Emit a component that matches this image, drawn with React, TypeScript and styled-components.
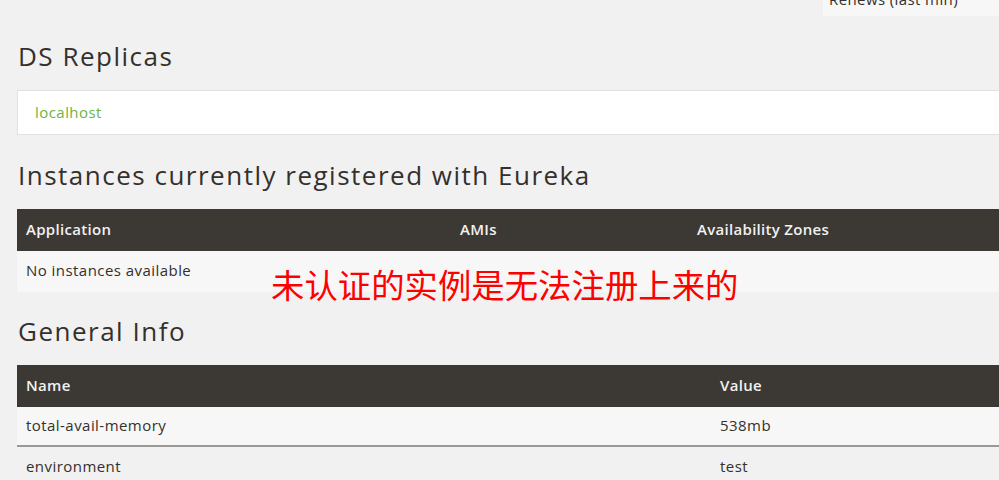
import React from "react";
import styled, { createGlobalStyle } from "styled-components";

const Global = createGlobalStyle`
  html, body { margin: 0; padding: 0; background: #f1f1f1; overflow: hidden; }
  body { font-family: "Open Sans", "Noto Sans", sans-serif; color: #34302d; }
`;

const Page = styled.div`
  position: relative;
  width: 999px;
  height: 480px;
  overflow: hidden;
  background: #f1f1f1;
`;

const TopStrip = styled.div`
  display: flex;
  justify-content: flex-end;
`;

const RenewsCell = styled.div`
  width: 176px;
  height: 16px;
  background: #f7f7f7;
  overflow: hidden;
  padding-left: 6px;
  box-sizing: border-box;
`;

const RenewsText = styled.div`
  margin-top: -11px;
  font-size: 15px;
  line-height: 20px;
  letter-spacing: 0.4px;
  color: #34302d;
  white-space: nowrap;
`;

const Content = styled.div`
  padding-left: 17px;
  display: flex;
  flex-direction: column;
  width: 1200px;
`;

const Heading = styled.h2<{ $top: number }>`
  margin: ${(p) => p.$top}px 0 19px 1px;
  font-size: 26px;
  line-height: 30px;
  font-weight: 500;
  letter-spacing: 1.5px;
  color: #34302d;
  white-space: nowrap;
`;

const ReplicaBox = styled.div`
  height: 45px;
  box-sizing: border-box;
  border: 1px solid #e1e1e1;
  background: #ffffff;
  padding: 0 17px 2px;
  display: flex;
  align-items: center;
`;

const ReplicaLink = styled.span`
  color: #6db33f;
  font-size: 15px;
  letter-spacing: 0.45px;
`;

const Table = styled.div<{ $cols: string }>`
  display: grid;
  grid-template-columns: ${(p) => p.$cols};
`;

const HeadCell = styled.div`
  height: 42px;
  box-sizing: border-box;
  background: #3c3834;
  color: #f1f1f1;
  font-size: 15px;
  font-weight: 600;
  letter-spacing: 0.3px;
  padding: 0 9px 3px;
  display: flex;
  align-items: center;
  white-space: nowrap;
`;

const BodyCell = styled.div<{ $alt?: boolean; $line?: boolean }>`
  height: ${(p) => (p.$line ? 40 : 41)}px;
  box-sizing: border-box;
  background: ${(p) => (p.$alt ? "#f1f1f1" : "#f7f7f7")};
  border-bottom: ${(p) => (p.$line ? "2px solid #9a9895" : "none")};
  font-size: 15px;
  letter-spacing: 0.45px;
  padding: 0 9px 3px;
  display: flex;
  align-items: center;
  white-space: nowrap;
`;

const Annotation = styled.div`
  position: absolute;
  left: 271px;
  top: 266px;
  font-family: "Noto Sans CJK SC", "Noto Sans", sans-serif;
  font-size: 33.4px;
  line-height: 36px;
  color: #ff0000;
  white-space: nowrap;
`;

export default function App() {
  return (
    <Page>
      <Global />
      <TopStrip>
        <RenewsCell>
          <RenewsText>Renews (last min)</RenewsText>
        </RenewsCell>
      </TopStrip>
      <Content>
        <Heading $top={25}>DS Replicas</Heading>
        <ReplicaBox>
          <ReplicaLink>localhost</ReplicaLink>
        </ReplicaBox>
        <Heading $top={25}>Instances currently registered with Eureka</Heading>
        <Table $cols="434px 237px 1fr">
          <HeadCell>Application</HeadCell>
          <HeadCell>AMIs</HeadCell>
          <HeadCell>Availability Zones</HeadCell>
          <BodyCell>No instances available</BodyCell>
          <BodyCell />
          <BodyCell />
        </Table>
        <Heading $top={24}>General Info</Heading>
        <Table $cols="694px 1fr">
          <HeadCell>Name</HeadCell>
          <HeadCell>Value</HeadCell>
          <BodyCell $line>total-avail-memory</BodyCell>
          <BodyCell $line>538mb</BodyCell>
          <BodyCell $alt>environment</BodyCell>
          <BodyCell $alt>test</BodyCell>
        </Table>
      </Content>
      <Annotation>未认证的实例是无法注册上来的</Annotation>
    </Page>
  );
}
